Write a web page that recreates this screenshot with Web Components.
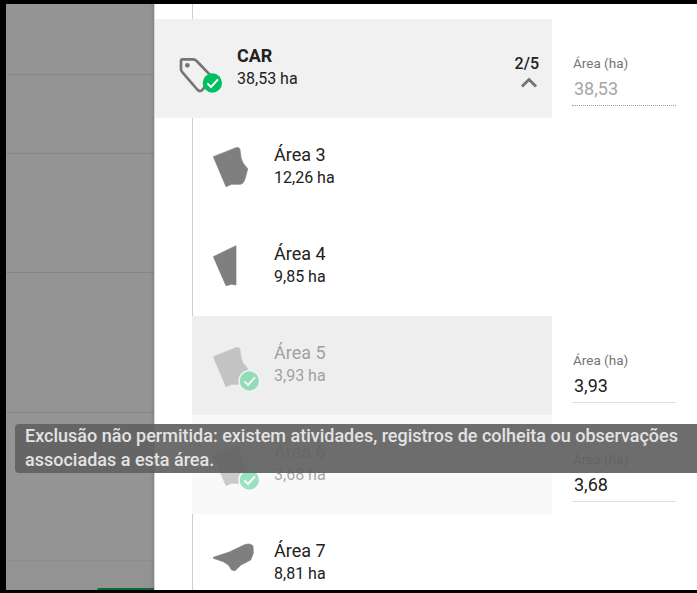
<!DOCTYPE html>
<html lang="pt">
<head>
<meta charset="utf-8">
<title>Áreas</title>
<style>
  html, body { margin: 0; height: 100%; overflow: hidden; background: #000; }
  body { font-family: Roboto, "Liberation Sans", sans-serif; }
</style>
</head>
<body>
<area-screen>
  <side-list slot="side"></side-list>
  <area-panel slot="panel">
    <area-row group shape="tag" count="2/5">
      CAR
      <span slot="size">38,53 ha</span>
      <area-field slot="field" value="38,53" locked></area-field>
    </area-row>
    <area-row shape="a3">
      Área 3
      <span slot="size">12,26 ha</span>
    </area-row>
    <area-row shape="a4">
      Área 4
      <span slot="size">9,85 ha</span>
    </area-row>
    <area-row shape="a5" checked tone="#eeeeee">
      Área 5
      <span slot="size">3,93 ha</span>
      <area-field slot="field" value="3,93"></area-field>
    </area-row>
    <area-row shape="a5" checked tone="#f9f9f9">
      Área 6
      <span slot="size">3,68 ha</span>
      <area-field slot="field" value="3,68"></area-field>
    </area-row>
    <area-row shape="a7">
      Área 7
      <span slot="size">8,81 ha</span>
    </area-row>
  </area-panel>
  <notice-tip slot="tip">Exclusão não permitida: existem atividades, registros de colheita ou observações associadas a esta área.</notice-tip>
</area-screen>

<script>
  // icon outlines, 3 units = 1px, drawn in a 60x60 box
  const BLOB = "M40 65 L108 38 Q118 35 120 44 L123 68 L129 84 L143 101 L139 118 L135 132 Q130 147 122 148 L95 148 L78 155 Z";
  const SHAPES = {
    a3: { d: BLOB, dy: 0 },
    a4: { d: "M40 68 L108 35 L108 153 L95 151 L78 155 Z", dy: 0 },
    a5: { d: BLOB, dy: 6 },
    a7: { d: "M40 79 L88 63 L130 43 Q150 34 159 45 L160 67 L152 87 L135 96 L124 101 L105 119 L95 117 L85 102 L70 92 L40 82 Z", dy: 0 }
  };

  customElements.define("area-screen", class extends HTMLElement {
    constructor() {
      super();
      this.attachShadow({ mode: "open" }).innerHTML = `
        <style>
          :host {
            display: flex;
            position: relative;
            box-sizing: border-box;
            height: 593px;
            padding: 4px 0 3px 6px;
            background: #000;
            overflow: hidden;
          }
        </style>
        <slot name="side"></slot>
        <slot name="panel"></slot>
        <slot name="tip"></slot>`;
    }
  });

  customElements.define("side-list", class extends HTMLElement {
    constructor() {
      super();
      this.attachShadow({ mode: "open" }).innerHTML = `
        <style>
          :host {
            display: flex;
            flex-direction: column;
            flex: 0 0 149px;
            background: #949494;
            position: relative;
          }
          :host::after {
            content: "";
            position: absolute;
            top: 0;
            bottom: 0;
            right: 0;
            width: 5px;
            background: linear-gradient(to right, rgba(0,0,0,0), rgba(0,0,0,.1) 80%, rgba(215,215,215,1) 80%);
          }
          .line { border-bottom: 1px solid #868686; }
          .last { flex: 1; display: flex; align-items: flex-end; justify-content: flex-end; background: #939393; border-top: 1px solid #8d8d8d; }
          .btn { width: 58px; height: 2px; background: #0c6b3b; border-radius: 2px 0 0 0; }
        </style>
        <div class="line" style="height:70px"></div>
        <div class="line" style="height:78px"></div>
        <div class="line" style="height:118px"></div>
        <div class="line" style="height:139px"></div>
        <div style="height:147px"></div>
        <div class="last"><div class="btn"></div></div>`;
    }
  });

  customElements.define("area-panel", class extends HTMLElement {
    constructor() {
      super();
      this.attachShadow({ mode: "open" }).innerHTML = `
        <style>
          :host {
            display: block;
            flex: 1;
            box-sizing: border-box;
            padding-top: 15px;
            background: #fff linear-gradient(#cfcfcf, #cfcfcf) 37px 0 / 1px 100% no-repeat;
            overflow: hidden;
          }
        </style>
        <slot></slot>`;
    }
  });

  customElements.define("area-row", class extends HTMLElement {
    constructor() {
      super();
      const group = this.hasAttribute("group");
      const checked = this.hasAttribute("checked");
      const count = this.getAttribute("count");
      const shape = SHAPES[this.getAttribute("shape")];
      this.attachShadow({ mode: "open" }).innerHTML = `
        <style>
          :host {
            display: flex;
            height: 99px;
            color: #212121;
          }
          .block {
            display: flex;
            align-items: center;
            box-sizing: border-box;
            width: 360px;
            margin-left: 37px;
            padding: 0 13px 0 8px;
            background: ${this.getAttribute("tone") || "transparent"};
          }
          :host([group]) .block {
            width: 397px;
            margin-left: 0;
            padding-left: 10px;
            background: #f1f1f1;
          }
          .fade { display: flex; align-items: center; flex: 1; }
          :host([checked]) .fade { opacity: .38; }
          svg.icon { flex: none; width: 60px; height: 60px; margin-bottom: 5px; margin-right: 14px; }
          :host([group]) svg.icon { margin: 3px 12px 0 0; }
          .text { flex: 1; margin-top: -2px; }
          .name { font-size: 18px; line-height: 22px; }
          :host([group]) .name { font-weight: 700; }
          .size { font-size: 16px; line-height: 22px; padding-top: 1px; }
          .count { display: flex; flex-direction: column; align-items: flex-end; margin-top: 4px; font-size: 16px; font-weight: 500; line-height: 20px; }
          .count svg { display: block; margin: 3px 1px 0 0; }
          ::slotted(area-field) { margin-left: 20px; }
        </style>
        <div class="block">
          <div class="fade">
            ${group ? `
            <svg class="icon" viewBox="0 0 180 180">
              <path d="M53 58 H84 Q90 58 95 63 L140 110 L112 150 Q105 156 98 150 L53 98 Q48 93 48 88 V63 Q48 58 53 58Z" fill="none" stroke="#757575" stroke-width="8" stroke-linejoin="round"/>
              <circle cx="67" cy="76" r="7" fill="#757575"/>
              <circle cx="142" cy="129" r="29" fill="#00bf5f"/>
              <path d="M127 130 L138 141 L159 118" fill="none" stroke="#fff" stroke-width="6"/>
            </svg>` : `
            <svg class="icon" viewBox="0 0 180 180">
              <path transform="translate(0 ${shape.dy})" d="${shape.d}" fill="#7f7f7f" stroke="#7f7f7f" stroke-width="2" stroke-linejoin="round"/>
              ${checked ? `
              <circle cx="148" cy="144" r="33" fill="#fff"/>
              <circle cx="148" cy="144" r="29" fill="#00bf5f"/>
              <path d="M133 145 L144 156 L165 133" fill="none" stroke="#fff" stroke-width="6"/>` : ""}
            </svg>`}
            <div class="text">
              <div class="name"><slot></slot></div>
              <div class="size"><slot name="size"></slot></div>
            </div>
          </div>
          ${count ? `
          <div class="count">
            <span>${count}</span>
            <svg width="18" height="11" viewBox="0 0 18 11"><path d="M2 9.5 L9 2.5 L16 9.5" fill="none" stroke="#757575" stroke-width="3"/></svg>
          </div>` : ""}
        </div>
        <slot name="field"></slot>`;
    }
  });

  customElements.define("area-field", class extends HTMLElement {
    constructor() {
      super();
      this.attachShadow({ mode: "open" }).innerHTML = `
        <style>
          :host {
            display: block;
            box-sizing: border-box;
            width: 104px;
            height: 51px;
            margin-top: 36px;
            padding-left: 1px;
            border-bottom: 1px solid #dddddd;
          }
          :host([locked]) { border-bottom: 1px dotted #9e9e9e; }
          .label { font-size: 13.5px; line-height: 16px; color: #757575; }
          .value { font-size: 18px; line-height: 24px; margin-top: 6px; padding-left: 1px; color: #212121; }
          :host([locked]) .value { color: #a6a6a6; }
        </style>
        <div class="label">Área (ha)</div>
        <div class="value">${this.getAttribute("value")}</div>`;
    }
  });

  customElements.define("notice-tip", class extends HTMLElement {
    constructor() {
      super();
      this.attachShadow({ mode: "open" }).innerHTML = `
        <style>
          :host {
            position: absolute;
            left: 15px;
            right: 0;
            top: 424px;
            box-sizing: border-box;
            height: 49px;
            padding: 0 10px;
            border-radius: 4px 0 0 4px;
            background: rgba(97, 97, 97, .92);
            color: #e3e3e3;
            font-size: 18px;
            font-weight: 500;
            line-height: 24px;
          }
        </style>
        <slot></slot>`;
    }
  });
</script>
</body>
</html>
